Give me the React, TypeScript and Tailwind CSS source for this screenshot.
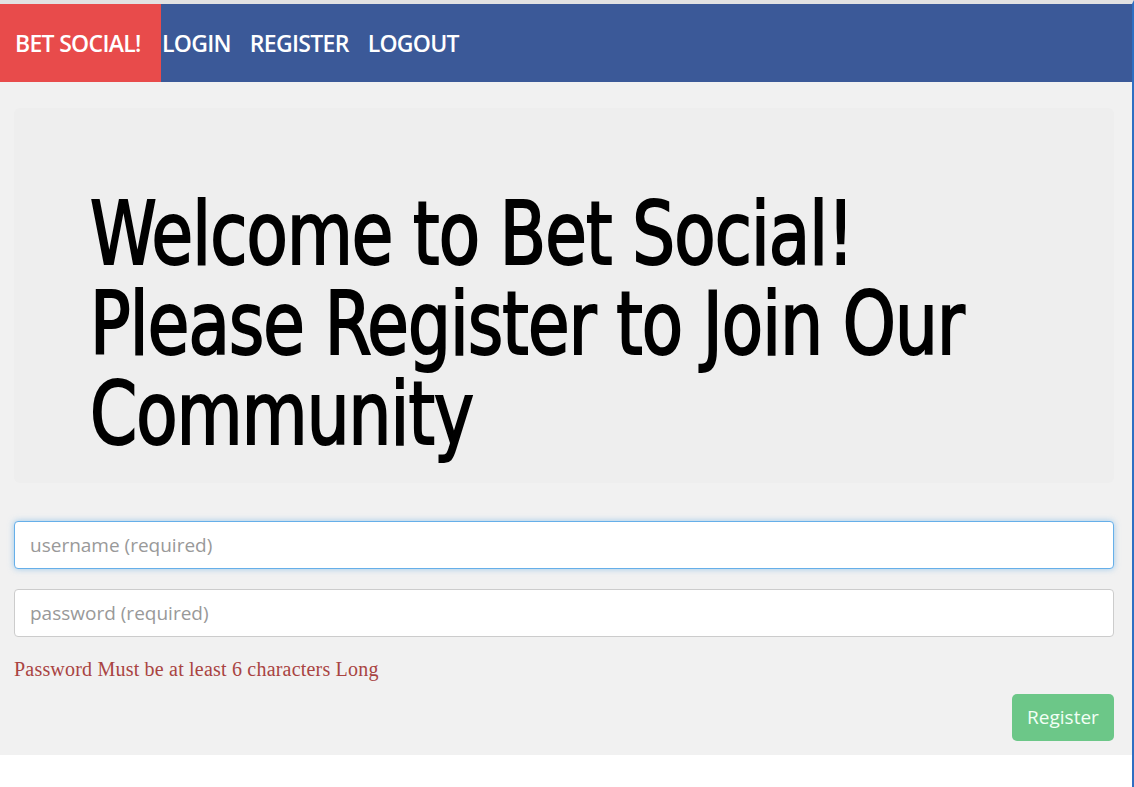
import { useState } from "react";

const navLinks = ["LOGIN", "REGISTER", "LOGOUT"];

export default function App() {
  const [username, setUsername] = useState("");
  const [password, setPassword] = useState("");

  return (
    <div className="min-h-[787px] bg-white border-t-4 border-t-[#e2e2e2] border-r-2 border-r-[#2e6fc2] font-['Open_Sans',sans-serif]">
      <nav className="h-[78px] bg-[#3b5998] flex items-stretch">
        <a className="w-[161px] bg-[#e84b4b] text-white text-[23px] font-semibold tracking-[-0.7px] flex items-center pl-[15px]">
          BET SOCIAL!
        </a>
        <ul className="flex items-center gap-[19px] pl-[1px]">
          {navLinks.map((link) => (
            <li key={link} className="text-white text-[23px] font-semibold tracking-[-0.7px]">
              {link}
            </li>
          ))}
        </ul>
      </nav>

      <main className="bg-[#f1f1f1] pl-[14px] pr-[18px] pt-[26px] pb-[14px]">
        <section className="bg-[#eeeeee] rounded-md pl-[76px] pr-[20px] pt-[81px] pb-[24px] overflow-hidden">
          <h1 className="font-['DejaVu_Sans_Condensed',sans-serif] text-[88px] leading-[90px] text-black tracking-[-1px] whitespace-nowrap origin-left scale-x-[0.853] [-webkit-text-stroke:2px_#000]">
            Welcome to Bet Social!
            <br />
            Please Register to Join Our
            <br />
            Community
          </h1>
        </section>

        <form className="mt-[38px] flex flex-col" onSubmit={(e) => e.preventDefault()}>
          <input
            value={username}
            onChange={(e) => setUsername(e.target.value)}
            placeholder="username (required)"
            className="h-[48px] w-full bg-white rounded-[4px] border border-[#66afe9] shadow-[0_0_6px_rgba(102,175,233,0.6)] px-[15px] text-[19px] text-[#555] placeholder:text-[#999] outline-none"
          />
          <input
            type="password"
            value={password}
            onChange={(e) => setPassword(e.target.value)}
            placeholder="password (required)"
            className="mt-[20px] h-[48px] w-full bg-white rounded-[4px] border border-[#cccccc] px-[15px] text-[19px] text-[#555] placeholder:text-[#999] outline-none"
          />
          <p className="mt-[17px] font-['Liberation_Serif',serif] text-[20px] tracking-[0.2px] text-[#a94442]">
            Password Must be at least 6 characters Long
          </p>
          <div className="flex justify-end mt-[10px]">
            <button className="h-[47px] w-[102px] rounded-[5px] bg-[#6cc788] text-[#f2fff5] text-[19px]">
              Register
            </button>
          </div>
        </form>
      </main>
    </div>
  );
}
